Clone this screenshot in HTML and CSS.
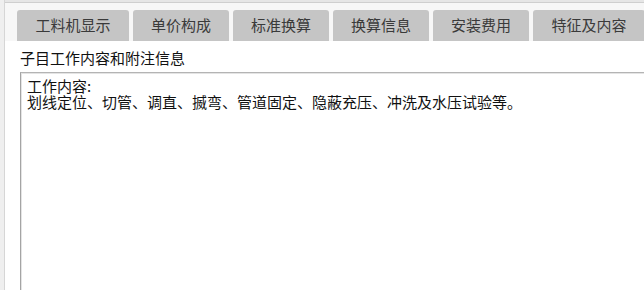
FILE: index.html
```html
<!DOCTYPE html>
<html lang="zh-CN">
<head>
<meta charset="utf-8">
<link rel="stylesheet" href="styles.css">
</head>
<body>
<div class="frame">
  <div class="edge"></div>
  <div class="main">
    <div class="topband"></div>
    <div class="tabstrip">
      <div class="tab tab-wide">工料机显示</div>
      <div class="tab">单价构成</div>
      <div class="tab">标准换算</div>
      <div class="tab">换算信息</div>
      <div class="tab">安装费用</div>
      <div class="tab tab-wide">特征及内容</div>
    </div>
    <div class="panel">
      <div class="label">子目工作内容和附注信息</div>
      <div class="memo">
        <p class="text">工作内容:<br>划线定位、切管、调直、揻弯、管道固定、隐蔽充压、冲洗及水压试验等。</p>
      </div>
    </div>
  </div>
</div>
</body>
</html>
```

FILE: styles.css
```css
html, body {
  margin: 0;
  padding: 0;
  width: 644px;
  height: 290px;
  overflow: hidden;
  background: #ffffff;
  font-family: "Noto Sans CJK SC", "Noto Sans", sans-serif;
  font-size: 15px;
  color: #1a1a1a;
}
.frame {
  display: flex;
  height: 290px;
}
.edge {
  width: 4px;
  flex: none;
  background: #efefef;
  border-right: 1px solid #d6d6d6;
}
.main {
  flex: 1;
  display: flex;
  flex-direction: column;
  min-width: 0;
}
.topband {
  height: 2px;
  background: #e6e6e6;
  border-bottom: 1px solid #cfcfcf;
  flex: none;
}
.tabstrip {
  flex: none;
  height: 38px;
  background: #f7f7f7;
  display: flex;
  align-items: flex-end;
  gap: 4px;
  padding-left: 12px;
  white-space: nowrap;
  overflow: hidden;
}
.tab {
  flex: none;
  width: 96px;
  height: 31px;
  box-sizing: border-box;
  background: #c5c5c5;
  border-radius: 3px 3px 0 0;
  color: #3a3a3a;
  font-size: 15px;
  line-height: 30px;
  text-align: center;
}
.tab-wide {
  width: 112px;
}
.panel {
  flex: 1;
  background: #ffffff;
  padding: 7px 0 0 15px;
  display: flex;
  flex-direction: column;
}
.label {
  font-size: 15px;
  line-height: 20px;
  height: 20px;
  color: #111;
  margin-bottom: 4px;
}
.memo {
  flex: 1;
  border-top: 1px solid #b4b4b4;
  border-left: 1px solid #a4a4a4;
  box-shadow: inset 1px 1px 0 #e4e4e4;
  padding: 5px 0 0 6px;
}
.text {
  margin: 0;
  font-size: 15px;
  line-height: 16px;
  color: #111;
  white-space: nowrap;
}
```
